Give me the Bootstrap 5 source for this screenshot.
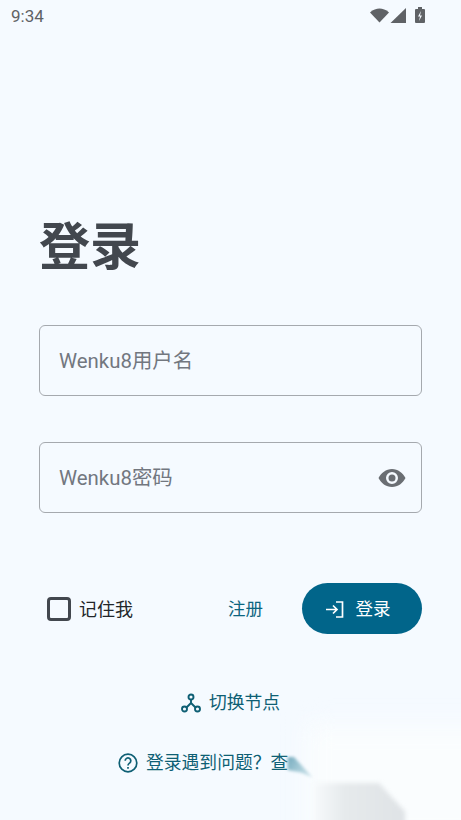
<!DOCTYPE html>
<html lang="zh"><head><meta charset="utf-8"><title>登录</title>
<link href="https://cdn.jsdelivr.net/npm/bootstrap@5.3.0/dist/css/bootstrap.min.css" rel="stylesheet">
<style>
html,body{height:820px;overflow:hidden}
body{background:#f5faff;font-family:Roboto,"Noto Sans CJK SC",sans-serif;color:#181c20;position:relative;width:461px}
.stbar{height:32px;padding:6px 31px 0 11px;color:#5f6266;font-size:17px;line-height:20px}
.stbar svg{display:block}
.pagebody{padding:0 39px}
.ttl{font-size:51px;font-weight:700;color:#42474e;line-height:70px;margin:181px 0 42px}
.fld{height:71px;border:1px solid #a5a9ae;border-radius:6px;padding:1px 19px 0;margin-bottom:46px;color:#72777f;font-size:20.4px;background:transparent}
.eyeic{margin-right:-4px}
.actions{margin-top:70px;height:51px}
.cbx{width:24px;height:24px;border:3px solid #42474e;border-radius:4px;margin-left:8px;margin-right:8px}
.cblabel{font-size:18px;color:#22262a;padding-top:1px}
.reg{font-size:17.5px;color:#0c6580;margin-right:39px;padding-top:1px}
.loginbtn{width:120px;height:51px;border-radius:26px;background:#01658a;color:#fff;font-size:17.5px;border:0;gap:12px;padding:1px 9px 0 0}
.alt1{margin-top:53px;font-size:17.8px;color:#0e5f74;gap:8px;line-height:30px}
.alt1 span{padding-top:1px}
.alt2{margin-top:30px;font-size:17.8px;color:#0e5f74;gap:8px;line-height:30px;padding-left:79px}
.fxlayer{position:absolute;left:0;top:0;width:461px;height:820px;overflow:hidden;pointer-events:none}
.smudge{position:absolute}
.sm-white{left:306px;top:724px;width:190px;height:120px;background:#fafdfe;filter:blur(12px)}
.sm-teal{left:285px;top:755px;width:32px;height:25px;filter:blur(1.500px)}
.sm-teal div{width:100%;height:100%;background:linear-gradient(120deg,#6ea6ba,#a9cdd9 50%,#e3f0f4);clip-path:polygon(8% 8%,28% 8%,86% 90%,50% 70%,8% 60%)}
.sm-grey{left:312px;top:783px;width:93px;height:42px;filter:blur(2px)}
.sm-grey div{width:100%;height:100%;background:linear-gradient(90deg,#f8fbfd,#e6eaec 35%,#dfe3e6);clip-path:polygon(0 0,72% 0,100% 68%,100% 100%,0 100%)}
</style></head><body>
<div class="stbar d-flex justify-content-between align-items-start">
<span>9:34</span>
<svg width="60" height="20" viewBox="0 0 60 20"><path d="M0 6.500C3 3.500 6.500 2.500 9.500 2.500S16 3.500 19 6.500L9.500 16.500Z" fill="#5f6266"/><path d="M36 2V17H20.500Z" fill="#5f6266"/><path d="M46 3h2V1h4v2h2a1 1 0 0 1 1 1v12a1 1 0 0 1-1 1h-8a1 1 0 0 1-1-1V4a1 1 0 0 1 1-1z" fill="#5f6266"/><path d="M51 5l-3 5.500h2L49 15l3-5.500h-2z" fill="#f5faff"/></svg>
</div>
<main class="pagebody">
<h1 class="ttl">登录</h1>
<div class="fld d-flex align-items-center">Wenku8用户名</div>
<div class="fld d-flex align-items-center justify-content-between">Wenku8密码
<svg width="28" height="20" viewBox="0 0 28 20" class="eyeic"><path fill-rule="evenodd" fill="#6a6e73" d="M14 1C8 1 3 5 0.500 10 3 15 8 19 14 19s11-4 13.500-9C25 5 20 1 14 1zm0 15a6 6 0 1 1 0-12 6 6 0 0 1 0 12zm0-2.500a3.500 3.500 0 1 0 0-7 3.500 3.500 0 0 0 0 7z"/></svg>
</div>
<div class="actions d-flex align-items-center">
<div class="cbx"></div><span class="cblabel flex-grow-1">记住我</span>
<a class="reg text-decoration-none">注册</a>
<button class="btn loginbtn d-flex align-items-center justify-content-center"><svg width="19" height="17" viewBox="0 0 19 17" fill="none" stroke="#fff" stroke-width="1.700"><path d="M11 1h6.500v15H11M1 8.500h11M8 4.500l4 4-4 4"/></svg><span>登录</span></button>
</div>
<div class="alt1 d-flex align-items-center justify-content-center">
<svg width="20" height="20" viewBox="0 0 20 20" fill="none" stroke="#0e5f74" stroke-width="1.900"><circle cx="10" cy="4" r="2.500"/><circle cx="3.500" cy="16" r="2.500"/><circle cx="16.500" cy="16" r="2.500"/><path d="M10 6.500v3.500L5.500 14.500M10 10l4.500 4.500"/></svg><span>切换节点</span></div>
<div class="alt2 d-flex align-items-center">
<svg width="20" height="20" viewBox="0 0 20 20" fill="none" stroke="#0e5f74" stroke-width="1.700"><circle cx="10" cy="10" r="8.800"/><path d="M7.200 7.800a2.800 2.800 0 1 1 4.300 2.300c-1 .7-1.500 1.200-1.500 2.400"/><path d="M10 14v1.700"/></svg><span>登录遇到问题？查</span></div>
</main>
<div class="fxlayer">
<div class="smudge sm-white"></div>
<div class="smudge sm-teal"><div></div></div>
<div class="smudge sm-grey"><div></div></div>
</div>
</body></html>
